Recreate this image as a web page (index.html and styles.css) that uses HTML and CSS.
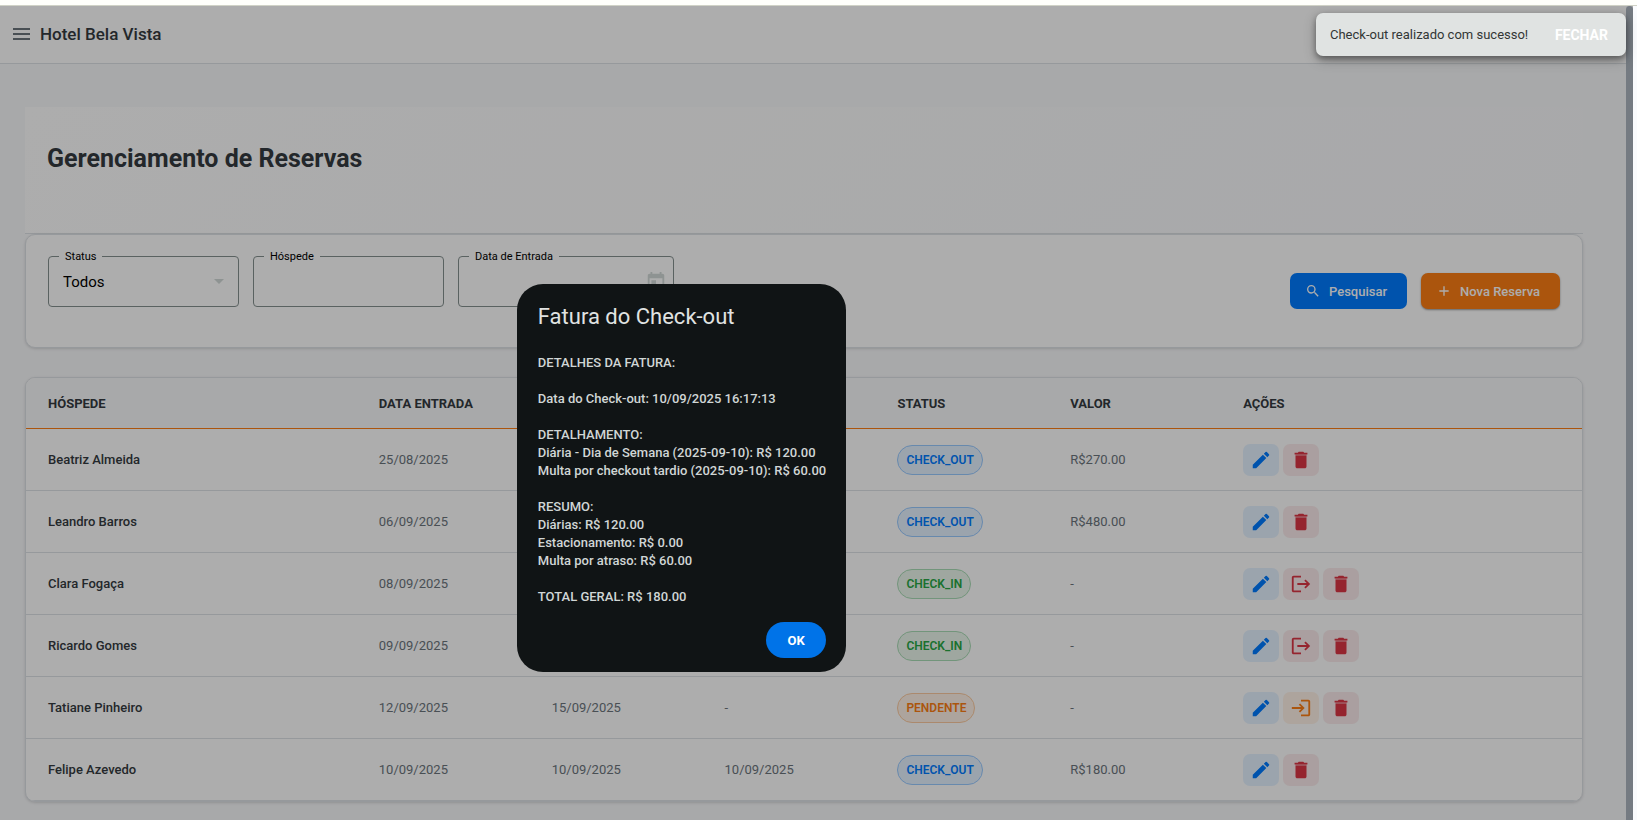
FILE: index.html
```html
<!DOCTYPE html>
<html lang="pt-BR">
<head>
<meta charset="utf-8">
<title>Hotel Bela Vista</title>
<link rel="stylesheet" href="styles.css">
</head>
<body>
<svg class="sprite" aria-hidden="true">
  <symbol id="i-edit" viewBox="0 0 24 24"><path d="M3 17.25V21h3.75L17.81 9.94l-3.75-3.75L3 17.25zM20.71 7.04a1 1 0 0 0 0-1.41l-2.34-2.34a1 1 0 0 0-1.41 0l-1.83 1.83 3.75 3.75 1.83-1.83z"/></symbol>
  <symbol id="i-trash" viewBox="0 0 24 24"><path d="M6 19c0 1.100.9 2 2 2h8c1.100 0 2-.9 2-2V7H6v12z"/><path d="M19 4h-3.500l-1-1h-5l-1 1H5v2h14V4z"/><path d="M6 6h12v1H6z" opacity=".6"/></symbol>
  <symbol id="i-out" viewBox="0 0 24 24"><path d="M17 7l-1.400 1.400L18.200 11H8v2h10.200l-2.600 2.600L17 17l5-5-5-5zM4 5h8V3H4c-1.100 0-2 .9-2 2v14c0 1.100.9 2 2 2h8v-2H4V5z"/></symbol>
  <symbol id="i-in" viewBox="0 0 24 24"><path d="M11 7L9.600 8.400l2.600 2.600H2v2h10.200l-2.600 2.600L11 17l5-5-5-5zm9 12h-8v2h8c1.100 0 2-.9 2-2V5c0-1.100-.9-2-2-2h-8v2h8v14z"/></symbol>
  <symbol id="i-search" viewBox="0 0 24 24"><path d="M15.500 14h-.79l-.28-.27A6.470 6.470 0 0 0 16 9.500 6.500 6.500 0 1 0 9.500 16c1.610 0 3.090-.59 4.230-1.570l.27.28v.79l5 4.990L20.490 19l-4.990-5zm-6 0a4.500 4.500 0 1 1 0-9 4.500 4.500 0 0 1 0 9z"/></symbol>
  <symbol id="i-plus" viewBox="0 0 24 24"><path d="M19 13h-6v6h-2v-6H5v-2h6V5h2v6h6v2z"/></symbol>
  <symbol id="i-cal" viewBox="0 0 24 24"><path d="M19 3h-1V1h-2v2H8V1H6v2H5c-1.110 0-2 .9-2 2v14a2 2 0 0 0 2 2h14c1.100 0 2-.9 2-2V5c0-1.100-.9-2-2-2zm0 16H5V8h14v11zM7 10h5v5H7z"/></symbol>
</svg>
<div class="window-edge"></div>
<div class="viewport">
  <div class="app">
    <header class="topbar">
      <button class="menu" aria-label="Menu"><svg viewBox="0 0 18 12"><path d="M0 1h17M0 6h17M0 11h17"/></svg></button>
      <span class="brand">Hotel Bela Vista</span>
    </header>
    <main class="page">
      <section class="hero"><h1>Gerenciamento de Reservas</h1></section>
      <form class="card filters">
        <fieldset class="field">
          <legend><label for="status">Status</label></legend>
          <select id="status"><option>Todos</option></select>
          <span class="caret"></span>
        </fieldset>
        <fieldset class="field">
          <legend><label for="guest">Hóspede</label></legend>
          <input id="guest" type="text">
        </fieldset>
        <fieldset class="field field-date">
          <legend><label for="date">Data de Entrada</label></legend>
          <input id="date" type="text">
          <button type="button" class="pick" aria-label="Abrir calendário"><svg><use href="#i-cal"/></svg></button>
        </fieldset>
        <div class="filter-actions">
          <button type="button" class="btn btn-search"><svg><use href="#i-search"/></svg>Pesquisar</button>
          <button type="button" class="btn btn-new"><svg><use href="#i-plus"/></svg>Nova Reserva</button>
        </div>
      </form>
      <section class="card list">
        <table>
          <colgroup><col class="wide"><col><col><col><col><col><col class="wide"></colgroup>
          <thead><tr><th>HÓSPEDE</th><th>DATA ENTRADA</th><th></th><th></th><th>STATUS</th><th>VALOR</th><th>AÇÕES</th></tr></thead>
          <tbody>
            <tr><td>Beatriz Almeida</td><td>25/08/2025</td><td></td><td></td><td><span class="badge blue">CHECK_OUT</span></td><td>R$270.00</td>
              <td><div class="acts"><button class="act blue" aria-label="Editar"><svg><use href="#i-edit"/></svg></button><button class="act red" aria-label="Excluir"><svg><use href="#i-trash"/></svg></button></div></td></tr>
            <tr><td>Leandro Barros</td><td>06/09/2025</td><td></td><td></td><td><span class="badge blue">CHECK_OUT</span></td><td>R$480.00</td>
              <td><div class="acts"><button class="act blue" aria-label="Editar"><svg><use href="#i-edit"/></svg></button><button class="act red" aria-label="Excluir"><svg><use href="#i-trash"/></svg></button></div></td></tr>
            <tr><td>Clara Fogaça</td><td>08/09/2025</td><td></td><td></td><td><span class="badge green">CHECK_IN</span></td><td>-</td>
              <td><div class="acts"><button class="act blue" aria-label="Editar"><svg><use href="#i-edit"/></svg></button><button class="act red" aria-label="Check-out"><svg><use href="#i-out"/></svg></button><button class="act red" aria-label="Excluir"><svg><use href="#i-trash"/></svg></button></div></td></tr>
            <tr><td>Ricardo Gomes</td><td>09/09/2025</td><td></td><td></td><td><span class="badge green">CHECK_IN</span></td><td>-</td>
              <td><div class="acts"><button class="act blue" aria-label="Editar"><svg><use href="#i-edit"/></svg></button><button class="act red" aria-label="Check-out"><svg><use href="#i-out"/></svg></button><button class="act red" aria-label="Excluir"><svg><use href="#i-trash"/></svg></button></div></td></tr>
            <tr><td>Tatiane Pinheiro</td><td>12/09/2025</td><td>15/09/2025</td><td>-</td><td><span class="badge orange">PENDENTE</span></td><td>-</td>
              <td><div class="acts"><button class="act blue" aria-label="Editar"><svg><use href="#i-edit"/></svg></button><button class="act orange" aria-label="Check-in"><svg><use href="#i-in"/></svg></button><button class="act red" aria-label="Excluir"><svg><use href="#i-trash"/></svg></button></div></td></tr>
            <tr><td>Felipe Azevedo</td><td>10/09/2025</td><td>10/09/2025</td><td>10/09/2025</td><td><span class="badge blue">CHECK_OUT</span></td><td>R$180.00</td>
              <td><div class="acts"><button class="act blue" aria-label="Editar"><svg><use href="#i-edit"/></svg></button><button class="act red" aria-label="Excluir"><svg><use href="#i-trash"/></svg></button></div></td></tr>
          </tbody>
        </table>
      </section>
    </main>
  </div>
  <div class="scrollbar"></div>
  <div class="backdrop">
    <div class="dialog" role="dialog" aria-labelledby="dlg-title">
      <h2 id="dlg-title">Fatura do Check-out</h2>
      <p class="invoice">DETALHES DA FATURA:

Data do Check-out: 10/09/2025 16:17:13

DETALHAMENTO:
Diária - Dia de Semana (2025-09-10): R$ 120.00
Multa por checkout tardio (2025-09-10): R$ 60.00

RESUMO:
Diárias: R$ 120.00
Estacionamento: R$ 0.00
Multa por atraso: R$ 60.00

TOTAL GERAL: R$ 180.00</p>
      <button class="ok">OK</button>
    </div>
  </div>
  <div class="snackbar" role="status"><span>Check-out realizado com sucesso!</span><button>FECHAR</button></div>
</div>
</body>
</html>
```
FILE: styles.css
```css
* { box-sizing: border-box; }
body {
  margin: 0;
  height: 100vh;
  overflow: hidden;
  display: flex;
  flex-direction: column;
  background: #fafbfd;
  font-family: Roboto, "Liberation Sans", sans-serif;
  font-size: 13px;
  color: #343a40;
}
button, input, select { font: inherit; color: inherit; border: 0; padding: 0; margin: 0; background: none; }
svg { display: block; fill: currentColor; }
h1, h2, p { margin: 0; }
.sprite { position: absolute; width: 0; height: 0; }
.window-edge { flex: none; height: 6px; background: #fffffb; border-bottom: 1px solid #d0d2c6; }

.viewport { position: relative; flex: 1; min-height: 0; display: flex; margin-right: 4px; background: #f8f9fb; }
.app { flex: 1; min-width: 0; overflow: hidden; }
.scrollbar { flex: none; width: 7px; background: #adb5c0; border-radius: 4px 4px 0 0; }

.topbar { display: flex; align-items: center; gap: 9px; height: 58px; padding: 0 13px 2px; background: #fff; border-bottom: 1px solid #dee2e6; }
.menu svg { width: 18px; height: 12px; fill: none; stroke: #6c757d; stroke-width: 2; }
.brand { font-size: 17px; font-weight: 500; }

.page { padding: 43px 43px 0 25px; }
.hero { padding: 36px 22px 58px; background: linear-gradient(135deg, #fff, #f8f9fb); border-bottom: 1px solid #dee2e6; }
.hero h1 { font-size: 25px; line-height: 32px; font-weight: 700; }

.card { background: #fff; border: 1px solid #dee2e6; border-radius: 10px; box-shadow: 0 1px 3px rgba(0, 0, 0, .14); }
.filters { display: flex; align-items: flex-start; gap: 14px; padding: 14px 22px 38px; }
.field { display: flex; align-items: center; width: 191px; height: 58px; margin: 0; padding: 0 14px 6px; border: 1px solid #85918f; border-radius: 4px; color: #000; }
.field-date { width: 216px; padding-right: 6px; }
.field legend { margin-left: -4px; padding: 2px 6px 0; font-size: 11px; line-height: 12px; }
.field input, .field select { flex: 1; min-width: 0; width: 100%; height: 36px; appearance: none; outline: 0; font-size: 15px; }
.caret { border: 5px solid transparent; border-top-color: #d2d9d7; border-bottom: 0; }
.pick svg { width: 22px; height: 22px; color: #d2d9d7; }
.filter-actions { display: flex; gap: 14px; margin: 24px 0 0 auto; }
.btn { display: flex; align-items: center; gap: 8px; height: 36px; padding: 0 20px 0 15px; border-radius: 7px; font-weight: 500; color: #fff; }
.btn svg { width: 16px; height: 16px; }
.btn-search { background: #007bff; }
.btn-new { background: #fd7e14; box-shadow: 0 1px 2px rgba(0, 0, 0, .4); }

.list { margin-top: 29px; overflow: hidden; }
table { width: 100%; table-layout: fixed; border-collapse: separate; border-spacing: 0; }
col { width: 11.11%; }
col.wide { width: 22.22%; }
th, td { padding: 0 7px; text-align: left; font-weight: 400; white-space: nowrap; }
th:first-child, td:first-child { padding-left: 22px; }
th { height: 51px; background: #f8f9fb; border-bottom: 1px solid #fd7e14; font-weight: 700; }
td { height: 62px; border-bottom: 1px solid #dee2e6; color: #6c757d; }
td:first-child { color: #343a40; font-weight: 500; }

.badge { display: inline-flex; align-items: center; height: 30px; padding: 0 8px; border: 1px solid; border-radius: 15px; font-size: 12px; font-weight: 600; }
.badge.blue { color: #007bff; background: #e5f2ff; border-color: #99caff; }
.badge.green { color: #28a745; background: #eaf6ec; border-color: #a9dcb5; }
.badge.orange { color: #fd7e14; background: #fff2e7; border-color: #fdcba1; }
.acts { display: flex; gap: 4px; }
.act { display: grid; place-items: center; width: 36px; height: 32px; border-radius: 7px; }
.act svg { width: 22px; height: 22px; }
.act.blue { color: #007bff; background: #e5f2ff; }
.act.red { color: #dc3545; background: #fbebec; }
.act.orange { color: #fd7e14; background: #fff2e7; }

.backdrop { position: absolute; inset: 0; display: grid; place-items: start center; padding: 278px 270px 0 0; background: rgba(0, 0, 0, .32); }
.dialog { display: flex; flex-direction: column; padding: 20px 20px 14px 21px; border-radius: 26px; background: #101415; color: #e0e3e2; }
.dialog h2 { font-size: 22px; line-height: 26px; font-weight: 400; }
.invoice { margin: 24px 0 16px; font-size: 13px; line-height: 18px; font-weight: 500; color: #d0d6d5; white-space: pre; }
.ok { align-self: flex-end; width: 60px; height: 36px; border-radius: 18px; background: #0073e8; color: #fff; font-weight: 700; }

.snackbar { position: absolute; top: 7px; right: 7px; display: flex; align-items: center; justify-content: space-between; gap: 18px; min-width: 310px; height: 43px; padding: 0 18px 0 14px; border-radius: 7px; background: #e0e3e2; color: #323635; box-shadow: 0 3px 6px rgba(0, 0, 0, .4), 0 4px 14px rgba(0, 0, 0, .2); }
.snackbar button { font-size: 14px; color: #fff; font-weight: 700; }
```
